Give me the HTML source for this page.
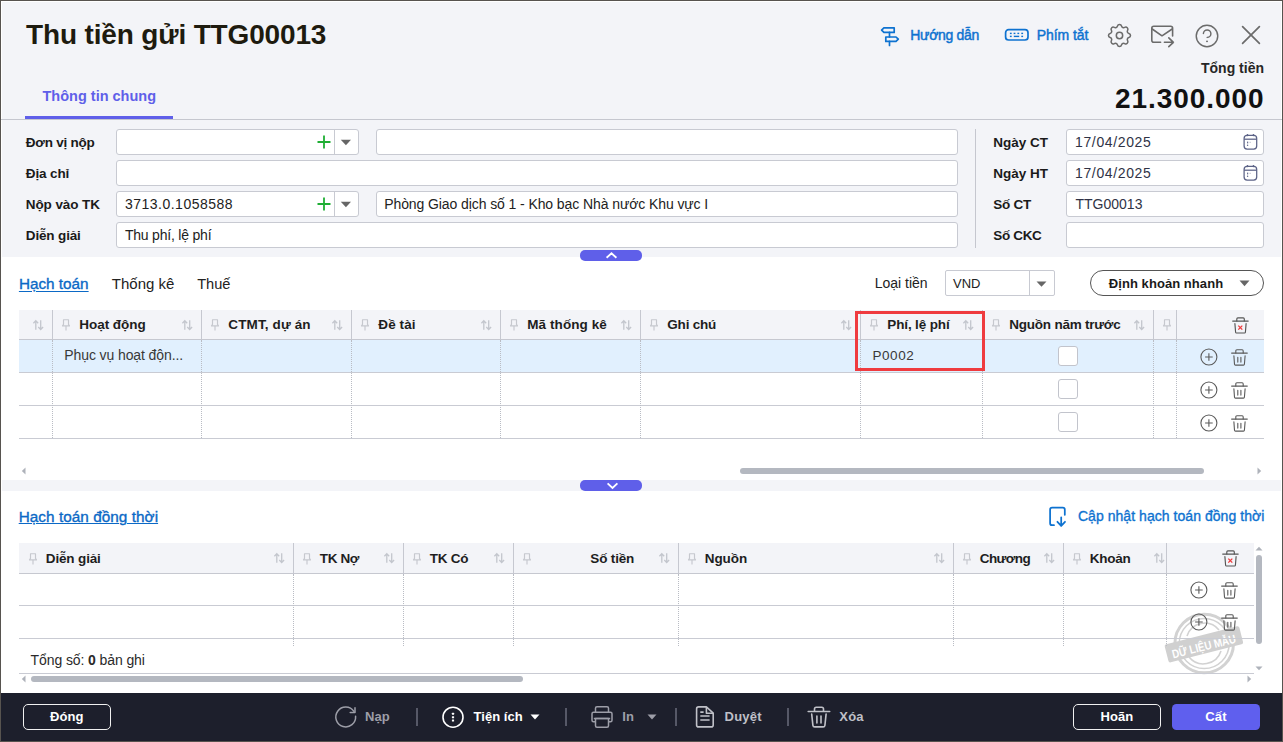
<!DOCTYPE html>
<html><head><meta charset="utf-8"><style>
html,body{margin:0;padding:0;width:1283px;height:742px;overflow:hidden;background:#f3f4f8;}
body{position:relative;font-family:"Liberation Sans", sans-serif;}
.t{position:absolute;line-height:1;white-space:nowrap;}
.b{position:absolute;box-sizing:border-box;}
.s{position:absolute;overflow:visible;}
b{font-weight:700;}
</style></head><body>
<div class="b" style="left:0px;top:0px;width:1283px;height:742px;background:#f3f4f8;"></div>
<div class="b" style="left:1px;top:1px;width:1281px;height:692px;border-top:1px solid #fff;border-left:1px solid #fff;border-right:1px solid #fff;"></div>
<div class="b" style="left:2px;top:257px;width:1279px;height:436px;background:#fff;"></div>
<div class="t" style="left:26px;top:20.70px;font-size:28px;font-weight:700;color:#1e1b0f;letter-spacing:-0.15px;">Thu tiền gửi TTG00013</div>
<svg class="s" style="left:876px;top:22px;" width="28" height="28" viewBox="0 0 28 28"><g fill="none" stroke="#0e72d0" stroke-width="1.7" stroke-linejoin="round" stroke-linecap="round"><path d="M5.6,8.1 L7.9,5.8 H18.2 V10.4 H7.9 Z"/><path d="M13.5,10.4 V15"/><path d="M9.8,15 H20 L22.3,17.2 L20,19.4 H9.8 Z"/><path d="M13.5,19.4 V23.4"/></g></svg>
<div class="t" style="left:910.3px;top:28.25px;font-size:14px;font-weight:400;color:#0e72d0;letter-spacing:-0.3px;-webkit-text-stroke:0.45px #0e72d0;">Hướng dẫn</div>
<svg class="s" style="left:1000px;top:22px;" width="32" height="26" viewBox="0 0 32 26"><g fill="none" stroke="#0e72d0" stroke-width="1.7"><rect x="5.6" y="7.7" width="22.4" height="10.3" rx="3"/></g><g fill="#0e72d0"><rect x="9.9" y="10.7" width="1.8" height="1.4"/><rect x="13.6" y="10.7" width="1.8" height="1.4"/><rect x="17.4" y="10.7" width="1.8" height="1.4"/><rect x="21.3" y="10.7" width="1.8" height="1.4"/><rect x="9.9" y="13.7" width="1.8" height="1.4"/><rect x="13.8" y="13.7" width="5.4" height="1.4"/><rect x="21.3" y="13.7" width="1.8" height="1.4"/></g></svg>
<div class="t" style="left:1036.7px;top:28.25px;font-size:14px;font-weight:400;color:#0e72d0;letter-spacing:-0.05px;-webkit-text-stroke:0.45px #0e72d0;">Phím tắt</div>
<svg class="s" style="left:1107.6px;top:23.6px;" width="23" height="23" viewBox="2.6 2.6 18.8 18.8"><g fill="none" stroke="#6b6b6b" stroke-width="1.25" stroke-linejoin="round"><path d="M10.325 4.317c.426 -1.756 2.924 -1.756 3.35 0a1.724 1.724 0 0 0 2.573 1.066c1.543 -.94 3.31 .826 2.37 2.37a1.724 1.724 0 0 0 1.065 2.572c1.756 .426 1.756 2.924 0 3.35a1.724 1.724 0 0 0 -1.066 2.573c.94 1.543 -.826 3.31 -2.37 2.37a1.724 1.724 0 0 0 -2.572 1.065c-.426 1.756 -2.924 1.756 -3.35 0a1.724 1.724 0 0 0 -2.573 -1.066c-1.543 .94 -3.31 -.826 -2.37 -2.37a1.724 1.724 0 0 0 -1.065 -2.572c-1.756 -.426 -1.756 -2.924 0 -3.35a1.724 1.724 0 0 0 1.066 -2.573c-.94 -1.543 .826 -3.31 2.37 -2.37c1 .608 2.296 .07 2.572 -1.065z"/><circle cx="12" cy="12" r="2.6"/></g></svg>
<svg class="s" style="left:1145.4px;top:20px;" width="34" height="30" viewBox="0 0 34 30"><g fill="none" stroke="#6b6b6b" stroke-width="1.6" stroke-linecap="round" stroke-linejoin="round"><path d="M15.6,22.3 H8.8 Q6.8,22.3 6.8,20.3 V8.2 Q6.8,6.2 8.8,6.2 H25.6 Q27.6,6.2 27.6,8.2 V16"/><path d="M7.2,9 L17,15.8 L27.2,9"/><path d="M19.4,22.3 H28.4 M23.8,17.9 L28.4,22.3 L23.8,26.7"/></g></svg>
<svg class="s" style="left:1194px;top:23px;" width="26" height="26" viewBox="0 0 26 26"><g fill="none" stroke="#6b6b6b" stroke-width="1.45" stroke-linecap="round"><circle cx="13" cy="13" r="10.75"/><path d="M9.4,10.6 A3.75,3.75 0 1 1 13.2,14.4"/></g><ellipse cx="13" cy="18.4" rx="1" ry="0.8" fill="#6b6b6b"/></svg>
<svg class="s" style="left:1240px;top:24px;" width="22" height="22" viewBox="0 0 22 22"><g stroke="#6b6b6b" stroke-width="1.7" stroke-linecap="round"><path d="M2.6,2.6 L19.4,19.4 M19.4,2.6 L2.6,19.4"/></g></svg>
<div class="t" style="right:19px;top:60.95px;font-size:14px;font-weight:700;color:#262626;letter-spacing:0px;">Tổng tiền</div>
<div class="t" style="left:1115px;top:85.20px;font-size:28px;font-weight:700;color:#111;letter-spacing:0.95px;">21.300.000</div>
<div class="t" style="left:42.5px;top:88.93px;font-size:14.5px;font-weight:700;color:#5f5fe9;letter-spacing:0px;">Thông tin chung</div>
<div class="b" style="left:1px;top:119px;width:1281px;height:1px;background:#c5c7cf;"></div>
<div class="b" style="left:25px;top:116px;width:148px;height:3px;background:#5f5fe9;"></div>
<div class="t" style="left:25.8px;top:135.77px;font-size:13.5px;font-weight:700;color:#1a1a1a;letter-spacing:-0.24px;">Đơn vị nộp</div>
<div class="t" style="left:25.8px;top:166.77px;font-size:13.5px;font-weight:700;color:#1a1a1a;letter-spacing:-0.12px;">Địa chỉ</div>
<div class="t" style="left:25.8px;top:197.77px;font-size:13.5px;font-weight:700;color:#1a1a1a;letter-spacing:-0.1px;">Nộp vào TK</div>
<div class="t" style="left:25.8px;top:228.77px;font-size:13.5px;font-weight:700;color:#1a1a1a;letter-spacing:-0.15px;">Diễn giải</div>
<div class="b" style="left:116px;top:129px;width:243px;height:26px;background:#fff;border:1px solid #c8cad2;border-radius:3px;"></div>
<div class="b" style="left:334px;top:130px;width:1px;height:24px;background:#c8cad2;"></div>
<svg class="s" style="left:317px;top:135px;" width="14" height="14" viewBox="0 0 14 14"><path d="M7,0.5 V13.5 M0.5,7 H13.5" stroke="#1fae34" stroke-width="1.8"/></svg>
<svg class="s" style="left:340px;top:139px;" width="12" height="7" viewBox="0 0 12 7"><path d="M0.8,0.8 H11 L5.9,6.2 Z" fill="#666"/></svg>
<div class="b" style="left:376px;top:129px;width:582px;height:26px;background:#fff;border:1px solid #c8cad2;border-radius:3px;"></div>
<div class="b" style="left:116px;top:160px;width:842px;height:26px;background:#fff;border:1px solid #c8cad2;border-radius:3px;"></div>
<div class="b" style="left:116px;top:191px;width:243px;height:26px;background:#fff;border:1px solid #c8cad2;border-radius:3px;"></div>
<div class="b" style="left:334px;top:192px;width:1px;height:24px;background:#c8cad2;"></div>
<svg class="s" style="left:317px;top:197px;" width="14" height="14" viewBox="0 0 14 14"><path d="M7,0.5 V13.5 M0.5,7 H13.5" stroke="#1fae34" stroke-width="1.8"/></svg>
<svg class="s" style="left:340px;top:201px;" width="12" height="7" viewBox="0 0 12 7"><path d="M0.8,0.8 H11 L5.9,6.2 Z" fill="#666"/></svg>
<div class="t" style="left:124.9px;top:196.95px;font-size:14px;font-weight:400;color:#222;letter-spacing:0.5px;">3713.0.1058588</div>
<div class="b" style="left:376px;top:191px;width:582px;height:26px;background:#fff;border:1px solid #c8cad2;border-radius:3px;"></div>
<div class="t" style="left:384.2px;top:196.95px;font-size:14px;font-weight:400;color:#222;letter-spacing:-0.09px;">Phòng Giao dịch số 1 - Kho bạc Nhà nước Khu vực I</div>
<div class="b" style="left:116px;top:222px;width:842px;height:26px;background:#fff;border:1px solid #c8cad2;border-radius:3px;"></div>
<div class="t" style="left:124.9px;top:228.35px;font-size:14px;font-weight:400;color:#222;letter-spacing:-0.2px;">Thu phí, lệ phí</div>
<div class="b" style="left:975px;top:129px;width:1px;height:119px;background:#c5c7cf;"></div>
<div class="t" style="left:993.3px;top:135.77px;font-size:13.5px;font-weight:700;color:#1a1a1a;letter-spacing:0px;">Ngày CT</div>
<div class="b" style="left:1066px;top:129px;width:198px;height:26px;background:#fff;border:1px solid #c8cad2;border-radius:3px;"></div>
<div class="t" style="left:993.3px;top:166.77px;font-size:13.5px;font-weight:700;color:#1a1a1a;letter-spacing:0px;">Ngày HT</div>
<div class="b" style="left:1066px;top:160px;width:198px;height:26px;background:#fff;border:1px solid #c8cad2;border-radius:3px;"></div>
<div class="t" style="left:993.3px;top:197.77px;font-size:13.5px;font-weight:700;color:#1a1a1a;letter-spacing:-0.28px;">Số CT</div>
<div class="b" style="left:1066px;top:191px;width:198px;height:26px;background:#fff;border:1px solid #c8cad2;border-radius:3px;"></div>
<div class="t" style="left:993.3px;top:228.77px;font-size:13.5px;font-weight:700;color:#1a1a1a;letter-spacing:-0.35px;">Số CKC</div>
<div class="b" style="left:1066px;top:222px;width:198px;height:26px;background:#fff;border:1px solid #c8cad2;border-radius:3px;"></div>
<svg class="s" style="left:1242.5px;top:134px;" width="16" height="17" viewBox="0 0 16 17"><g fill="none" stroke="#5b6286" stroke-width="1.25"><rect x="1.1" y="1.4" width="12.6" height="13.6" rx="3"/><path d="M1.1,5.2 H13.7"/></g><g fill="#5b6286"><rect x="3.6" y="0.1" width="1.7" height="2.2" rx="0.8"/><rect x="9.6" y="0.1" width="1.7" height="2.2" rx="0.8"/><rect x="4.1" y="7.6" width="1.1" height="1.8" /><circle cx="4.6" cy="11.3" r="0.7"/><rect x="6.6" y="7.8" width="1.1" height="1.1" opacity="0.45"/></g></svg>
<svg class="s" style="left:1242.5px;top:165px;" width="16" height="17" viewBox="0 0 16 17"><g fill="none" stroke="#5b6286" stroke-width="1.25"><rect x="1.1" y="1.4" width="12.6" height="13.6" rx="3"/><path d="M1.1,5.2 H13.7"/></g><g fill="#5b6286"><rect x="3.6" y="0.1" width="1.7" height="2.2" rx="0.8"/><rect x="9.6" y="0.1" width="1.7" height="2.2" rx="0.8"/><rect x="4.1" y="7.6" width="1.1" height="1.8" /><circle cx="4.6" cy="11.3" r="0.7"/><rect x="6.6" y="7.8" width="1.1" height="1.1" opacity="0.45"/></g></svg>
<div class="t" style="left:1075px;top:135.15px;font-size:14px;font-weight:400;color:#2f3346;letter-spacing:0.64px;">17/04/2025</div>
<div class="t" style="left:1075px;top:166.15px;font-size:14px;font-weight:400;color:#2f3346;letter-spacing:0.64px;">17/04/2025</div>
<div class="t" style="left:1075.5px;top:197.15px;font-size:14px;font-weight:400;color:#2f3346;letter-spacing:0px;">TTG00013</div>
<div class="b" style="left:580px;top:250px;width:62px;height:11px;background:#5f5fe9;border-radius:5px;"></div>
<svg class="s" style="left:605.4px;top:252.3px;" width="13" height="7" viewBox="0 0 13 7"><path d="M1.6,5.8 L6.5,1.3 L11.4,5.8" fill="none" stroke="#fff" stroke-width="1.85"/></svg>
<div class="t" style="left:18.9px;top:275.75px;font-size:15.3px;font-weight:400;color:#0b69c6;letter-spacing:0px;text-decoration:underline;text-underline-offset:1.5px;text-decoration-thickness:1.3px;-webkit-text-stroke:0.35px #0b69c6;">Hạch toán</div>
<div class="t" style="left:111.8px;top:276.40px;font-size:15px;font-weight:400;color:#222;letter-spacing:0px;">Thống kê</div>
<div class="t" style="left:197.2px;top:276.74px;font-size:14.6px;font-weight:400;color:#222;letter-spacing:0px;">Thuế</div>
<div class="t" style="left:874.7px;top:276.35px;font-size:14px;font-weight:400;color:#222;letter-spacing:0px;">Loại tiền</div>
<div class="b" style="left:945px;top:270px;width:110px;height:26px;background:#fff;border:1px solid #c8cad2;border-radius:2px;"></div>
<div class="b" style="left:1029px;top:271px;width:1px;height:24px;background:#c8cad2;"></div>
<div class="t" style="left:953px;top:277.20px;font-size:13px;font-weight:400;color:#222;letter-spacing:0px;">VND</div>
<svg class="s" style="left:1036px;top:281px;" width="11" height="6" viewBox="0 0 11 6"><path d="M0.5,0.5 H10.5 L5.5,5.8 Z" fill="#666"/></svg>
<div class="b" style="left:1090px;top:270px;width:174px;height:26px;border:1px solid #555;border-radius:13px;background:#fff;"></div>
<div class="t" style="left:1108.8px;top:276.60px;font-size:13px;font-weight:700;color:#1a1a1a;letter-spacing:0.06px;">Định khoản nhanh</div>
<svg class="s" style="left:1238.5px;top:280px;" width="11" height="7" viewBox="0 0 11 7"><path d="M0.5,0.5 H10.5 L5.5,6.2 Z" fill="#666"/></svg>
<div class="b" style="left:19px;top:310px;width:1245px;height:29px;background:#f3f4f8;"></div>
<div class="b" style="left:19px;top:339px;width:1245px;height:1px;background:#c6c8d0;"></div>
<div class="b" style="left:19px;top:340px;width:1245px;height:32px;background:#e1f0fe;"></div>
<div class="b" style="left:19px;top:372px;width:1245px;height:1px;background:#c9cbd3;"></div>
<div class="b" style="left:19px;top:405px;width:1245px;height:1px;background:#c9cbd3;"></div>
<div class="b" style="left:19px;top:438px;width:1245px;height:1px;background:#c9cbd3;"></div>
<div class="b" style="left:52px;top:310px;width:1px;height:29px;background:#c6c8d0;"></div>
<div class="b" style="left:52px;top:340px;width:0;height:98px;border-left:1px dotted #b9bcc4;"></div>
<div class="b" style="left:201px;top:310px;width:1px;height:29px;background:#c6c8d0;"></div>
<div class="b" style="left:201px;top:340px;width:0;height:98px;border-left:1px dotted #b9bcc4;"></div>
<div class="b" style="left:351px;top:310px;width:1px;height:29px;background:#c6c8d0;"></div>
<div class="b" style="left:351px;top:340px;width:0;height:98px;border-left:1px dotted #b9bcc4;"></div>
<div class="b" style="left:500px;top:310px;width:1px;height:29px;background:#c6c8d0;"></div>
<div class="b" style="left:500px;top:340px;width:0;height:98px;border-left:1px dotted #b9bcc4;"></div>
<div class="b" style="left:640px;top:310px;width:1px;height:29px;background:#c6c8d0;"></div>
<div class="b" style="left:640px;top:340px;width:0;height:98px;border-left:1px dotted #b9bcc4;"></div>
<div class="b" style="left:860px;top:310px;width:1px;height:29px;background:#c6c8d0;"></div>
<div class="b" style="left:860px;top:340px;width:0;height:98px;border-left:1px dotted #b9bcc4;"></div>
<div class="b" style="left:982px;top:310px;width:1px;height:29px;background:#c6c8d0;"></div>
<div class="b" style="left:982px;top:340px;width:0;height:98px;border-left:1px dotted #b9bcc4;"></div>
<div class="b" style="left:1153px;top:310px;width:1px;height:29px;background:#c6c8d0;"></div>
<div class="b" style="left:1153px;top:340px;width:0;height:98px;border-left:1px dotted #b9bcc4;"></div>
<div class="b" style="left:1176px;top:310px;width:1px;height:29px;background:#c6c8d0;"></div>
<div class="b" style="left:1176px;top:340px;width:0;height:98px;border-left:1px dotted #b9bcc4;"></div>
<svg class="s" style="left:33px;top:320px;" width="11" height="10" viewBox="0 0 11 10"><g fill="none" stroke="#c3c6cd" stroke-width="1.3"><path d="M2.8,0.8 V9.8 M0.4,3.2 L2.8,0.7 L5.2,3.2"/><path d="M7.7,0.3 V9.4 M5.3,7 L7.7,9.5 L10.1,7"/></g></svg>
<svg class="s" style="left:62px;top:319px;" width="8" height="12" viewBox="0 0 8 12"><g fill="none" stroke="#c6c8ce" stroke-width="1.15" stroke-linejoin="round"><path d="M1.5,0.7 H6.5 V5.4 L7.5,6.9 H0.5 L1.5,5.4 Z"/><path d="M4,6.9 V11.4"/></g></svg>
<div class="t" style="left:79.3px;top:317.57px;font-size:13.5px;font-weight:700;color:#1e1e1e;letter-spacing:-0.05px;">Hoạt động</div>
<svg class="s" style="left:181.5px;top:320px;" width="11" height="10" viewBox="0 0 11 10"><g fill="none" stroke="#c3c6cd" stroke-width="1.3"><path d="M2.8,0.8 V9.8 M0.4,3.2 L2.8,0.7 L5.2,3.2"/><path d="M7.7,0.3 V9.4 M5.3,7 L7.7,9.5 L10.1,7"/></g></svg>
<svg class="s" style="left:211px;top:319px;" width="8" height="12" viewBox="0 0 8 12"><g fill="none" stroke="#c6c8ce" stroke-width="1.15" stroke-linejoin="round"><path d="M1.5,0.7 H6.5 V5.4 L7.5,6.9 H0.5 L1.5,5.4 Z"/><path d="M4,6.9 V11.4"/></g></svg>
<div class="t" style="left:228.3px;top:317.57px;font-size:13.5px;font-weight:700;color:#1e1e1e;letter-spacing:0.12px;">CTMT, dự án</div>
<svg class="s" style="left:331.5px;top:320px;" width="11" height="10" viewBox="0 0 11 10"><g fill="none" stroke="#c3c6cd" stroke-width="1.3"><path d="M2.8,0.8 V9.8 M0.4,3.2 L2.8,0.7 L5.2,3.2"/><path d="M7.7,0.3 V9.4 M5.3,7 L7.7,9.5 L10.1,7"/></g></svg>
<svg class="s" style="left:361px;top:319px;" width="8" height="12" viewBox="0 0 8 12"><g fill="none" stroke="#c6c8ce" stroke-width="1.15" stroke-linejoin="round"><path d="M1.5,0.7 H6.5 V5.4 L7.5,6.9 H0.5 L1.5,5.4 Z"/><path d="M4,6.9 V11.4"/></g></svg>
<div class="t" style="left:378.3px;top:317.57px;font-size:13.5px;font-weight:700;color:#1e1e1e;letter-spacing:0.1px;">Đề tài</div>
<svg class="s" style="left:480.5px;top:320px;" width="11" height="10" viewBox="0 0 11 10"><g fill="none" stroke="#c3c6cd" stroke-width="1.3"><path d="M2.8,0.8 V9.8 M0.4,3.2 L2.8,0.7 L5.2,3.2"/><path d="M7.7,0.3 V9.4 M5.3,7 L7.7,9.5 L10.1,7"/></g></svg>
<svg class="s" style="left:510px;top:319px;" width="8" height="12" viewBox="0 0 8 12"><g fill="none" stroke="#c6c8ce" stroke-width="1.15" stroke-linejoin="round"><path d="M1.5,0.7 H6.5 V5.4 L7.5,6.9 H0.5 L1.5,5.4 Z"/><path d="M4,6.9 V11.4"/></g></svg>
<div class="t" style="left:527.3px;top:317.57px;font-size:13.5px;font-weight:700;color:#1e1e1e;letter-spacing:0.08px;">Mã thống kê</div>
<svg class="s" style="left:620.5px;top:320px;" width="11" height="10" viewBox="0 0 11 10"><g fill="none" stroke="#c3c6cd" stroke-width="1.3"><path d="M2.8,0.8 V9.8 M0.4,3.2 L2.8,0.7 L5.2,3.2"/><path d="M7.7,0.3 V9.4 M5.3,7 L7.7,9.5 L10.1,7"/></g></svg>
<svg class="s" style="left:650px;top:319px;" width="8" height="12" viewBox="0 0 8 12"><g fill="none" stroke="#c6c8ce" stroke-width="1.15" stroke-linejoin="round"><path d="M1.5,0.7 H6.5 V5.4 L7.5,6.9 H0.5 L1.5,5.4 Z"/><path d="M4,6.9 V11.4"/></g></svg>
<div class="t" style="left:667.3px;top:317.57px;font-size:13.5px;font-weight:700;color:#1e1e1e;letter-spacing:-0.2px;">Ghi chú</div>
<svg class="s" style="left:840.5px;top:320px;" width="11" height="10" viewBox="0 0 11 10"><g fill="none" stroke="#c3c6cd" stroke-width="1.3"><path d="M2.8,0.8 V9.8 M0.4,3.2 L2.8,0.7 L5.2,3.2"/><path d="M7.7,0.3 V9.4 M5.3,7 L7.7,9.5 L10.1,7"/></g></svg>
<svg class="s" style="left:870px;top:319px;" width="8" height="12" viewBox="0 0 8 12"><g fill="none" stroke="#c6c8ce" stroke-width="1.15" stroke-linejoin="round"><path d="M1.5,0.7 H6.5 V5.4 L7.5,6.9 H0.5 L1.5,5.4 Z"/><path d="M4,6.9 V11.4"/></g></svg>
<div class="t" style="left:887.3px;top:317.57px;font-size:13.5px;font-weight:700;color:#1e1e1e;letter-spacing:-0.14px;">Phí, lệ phí</div>
<svg class="s" style="left:962.5px;top:320px;" width="11" height="10" viewBox="0 0 11 10"><g fill="none" stroke="#c3c6cd" stroke-width="1.3"><path d="M2.8,0.8 V9.8 M0.4,3.2 L2.8,0.7 L5.2,3.2"/><path d="M7.7,0.3 V9.4 M5.3,7 L7.7,9.5 L10.1,7"/></g></svg>
<svg class="s" style="left:992px;top:319px;" width="8" height="12" viewBox="0 0 8 12"><g fill="none" stroke="#c6c8ce" stroke-width="1.15" stroke-linejoin="round"><path d="M1.5,0.7 H6.5 V5.4 L7.5,6.9 H0.5 L1.5,5.4 Z"/><path d="M4,6.9 V11.4"/></g></svg>
<div class="t" style="left:1009.3px;top:317.57px;font-size:13.5px;font-weight:700;color:#1e1e1e;letter-spacing:-0.23px;">Nguồn năm trước</div>
<svg class="s" style="left:1133.5px;top:320px;" width="11" height="10" viewBox="0 0 11 10"><g fill="none" stroke="#c3c6cd" stroke-width="1.3"><path d="M2.8,0.8 V9.8 M0.4,3.2 L2.8,0.7 L5.2,3.2"/><path d="M7.7,0.3 V9.4 M5.3,7 L7.7,9.5 L10.1,7"/></g></svg>
<svg class="s" style="left:1163px;top:319px;" width="8" height="12" viewBox="0 0 8 12"><g fill="none" stroke="#c6c8ce" stroke-width="1.15" stroke-linejoin="round"><path d="M1.5,0.7 H6.5 V5.4 L7.5,6.9 H0.5 L1.5,5.4 Z"/><path d="M4,6.9 V11.4"/></g></svg>
<svg class="s" style="left:1231.5px;top:316.5px;" width="17" height="17" viewBox="0 0 17 17"><g fill="none" stroke="#555" stroke-width="1.15" stroke-linecap="round"><path d="M0.7,4.1 H16.2"/><path d="M4.8,3.9 V2.0 Q4.8,0.9 5.9,0.9 H11.2 Q12.3,0.9 12.3,2 V3.9"/><path d="M2.9,6.6 L3.6,15.2 Q3.7,16 4.5,16 H12.5 Q13.3,16 13.4,15.2 L14.1,6.6"/></g><path d="M6.3,8.6 L10.3,12.6 M10.3,8.6 L6.3,12.6" stroke="#f0393a" stroke-width="1.3"/></svg>
<div class="t" style="left:64.3px;top:348.35px;font-size:14px;font-weight:400;color:#383838;letter-spacing:-0.1px;">Phục vụ hoạt độn...</div>
<div class="t" style="left:872.5px;top:349.17px;font-size:13.5px;font-weight:400;color:#383838;letter-spacing:0.55px;">P0002</div>
<div class="b" style="left:1058px;top:346px;width:20px;height:20px;background:#fff;border:1px solid #c2c4cc;border-radius:3px;"></div>
<svg class="s" style="left:1199.5px;top:348px;" width="18" height="18" viewBox="0 0 18 18"><g fill="none" stroke="#5a5a5a" stroke-width="1.1"><circle cx="8.9" cy="9" r="8"/><path d="M8.9,5.2 V12.8 M5.1,9 H12.7"/></g></svg>
<svg class="s" style="left:1230.5px;top:348.5px;" width="17" height="17" viewBox="0 0 17 17"><g fill="none" stroke="#5a5a5a" stroke-width="1.1" stroke-linecap="round"><path d="M0.6,4.1 H16.3"/><path d="M4.8,3.9 V1.9 Q4.8,0.8 5.9,0.8 H11.1 Q12.2,0.8 12.2,1.9 V3.9"/><path d="M2.9,6.9 L3.5,15.2 Q3.6,16.1 4.4,16.1 H12.5 Q13.3,16.1 13.4,15.2 L14.1,6.9"/><path d="M6.8,8.2 V13.1 M9.9,8.2 V13.1"/></g></svg>
<div class="b" style="left:1058px;top:379px;width:20px;height:20px;background:#fff;border:1px solid #c2c4cc;border-radius:3px;"></div>
<svg class="s" style="left:1199.5px;top:381px;" width="18" height="18" viewBox="0 0 18 18"><g fill="none" stroke="#5a5a5a" stroke-width="1.1"><circle cx="8.9" cy="9" r="8"/><path d="M8.9,5.2 V12.8 M5.1,9 H12.7"/></g></svg>
<svg class="s" style="left:1230.5px;top:381.5px;" width="17" height="17" viewBox="0 0 17 17"><g fill="none" stroke="#5a5a5a" stroke-width="1.1" stroke-linecap="round"><path d="M0.6,4.1 H16.3"/><path d="M4.8,3.9 V1.9 Q4.8,0.8 5.9,0.8 H11.1 Q12.2,0.8 12.2,1.9 V3.9"/><path d="M2.9,6.9 L3.5,15.2 Q3.6,16.1 4.4,16.1 H12.5 Q13.3,16.1 13.4,15.2 L14.1,6.9"/><path d="M6.8,8.2 V13.1 M9.9,8.2 V13.1"/></g></svg>
<div class="b" style="left:1058px;top:412px;width:20px;height:20px;background:#fff;border:1px solid #c2c4cc;border-radius:3px;"></div>
<svg class="s" style="left:1199.5px;top:414px;" width="18" height="18" viewBox="0 0 18 18"><g fill="none" stroke="#5a5a5a" stroke-width="1.1"><circle cx="8.9" cy="9" r="8"/><path d="M8.9,5.2 V12.8 M5.1,9 H12.7"/></g></svg>
<svg class="s" style="left:1230.5px;top:414.5px;" width="17" height="17" viewBox="0 0 17 17"><g fill="none" stroke="#5a5a5a" stroke-width="1.1" stroke-linecap="round"><path d="M0.6,4.1 H16.3"/><path d="M4.8,3.9 V1.9 Q4.8,0.8 5.9,0.8 H11.1 Q12.2,0.8 12.2,1.9 V3.9"/><path d="M2.9,6.9 L3.5,15.2 Q3.6,16.1 4.4,16.1 H12.5 Q13.3,16.1 13.4,15.2 L14.1,6.9"/><path d="M6.8,8.2 V13.1 M9.9,8.2 V13.1"/></g></svg>
<div class="b" style="left:855px;top:311px;width:130px;height:60px;border:3px solid #ef3b3f;"></div>
<svg class="s" style="left:21px;top:467px;" width="5" height="8" viewBox="0 0 5 8"><path d="M4.5,0.5 V7.5 L0.8,4 Z" fill="#aeb2ba"/></svg>
<div class="b" style="left:740px;top:468px;width:464px;height:6px;background:#b4b8c0;border-radius:3px;"></div>
<svg class="s" style="left:1257px;top:467px;" width="5" height="8" viewBox="0 0 5 8"><path d="M0.5,0.5 V7.5 L4.2,4 Z" fill="#aeb2ba"/></svg>
<div class="b" style="left:2px;top:480px;width:1279px;height:11px;background:#f3f4f8;"></div>
<div class="b" style="left:580px;top:480px;width:62px;height:11px;background:#5f5fe9;border-radius:5px;"></div>
<svg class="s" style="left:605.6px;top:482px;" width="13" height="7" viewBox="0 0 13 7"><path d="M1.6,1.3 L6.5,5.9 L11.4,1.3" fill="none" stroke="#fff" stroke-width="1.85"/></svg>
<div class="t" style="left:18.7px;top:509.45px;font-size:15.3px;font-weight:400;color:#0b69c6;letter-spacing:0.05px;text-decoration:underline;text-underline-offset:1px;text-decoration-thickness:1.3px;-webkit-text-stroke:0.35px #0b69c6;">Hạch toán đồng thời</div>
<svg class="s" style="left:1047px;top:505px;" width="21" height="23" viewBox="0 0 21 23"><g fill="none" stroke="#0e72d0" stroke-width="1.75" stroke-linecap="round" stroke-linejoin="round"><path d="M7,20.2 H5.1 Q3.1,20.2 3.1,18.2 V4.7 Q3.1,2.7 5.1,2.7 H15.8 Q17.8,2.7 17.8,4.7 V9.8"/><path d="M14.2,12.3 V20.9 M10.4,16.8 L14.2,20.9 L18,16.8"/></g></svg>
<div class="t" style="left:1077.9px;top:509.35px;font-size:14px;font-weight:400;color:#0e72d0;letter-spacing:0.05px;-webkit-text-stroke:0.35px #0e72d0;">Cập nhật hạch toán đồng thời</div>
<div class="b" style="left:19px;top:543px;width:1235px;height:30px;background:#f3f4f8;"></div>
<svg class="s" style="left:1163px;top:603px;" width="82" height="82" viewBox="0 0 82 82"><g fill="none" stroke="#d2d2d2"><circle cx="41.2" cy="40.5" r="29.3" stroke-width="3"/><circle cx="41.2" cy="40.5" r="25" stroke-width="1.5"/><path d="M24,33 A18.5,18.5 0 0 1 56,27" stroke-width="1.6"/><path d="M58,48 A18.5,18.5 0 0 1 26,54" stroke-width="1.6"/></g><g transform="rotate(-14.25 40.9 41.3)"><rect x="2.4" y="32" width="77" height="18.6" rx="2" fill="#d0d0d0"/><text x="7.6" y="47.5" font-family="Liberation Sans" font-weight="700" font-size="12" textLength="65.5" lengthAdjust="spacingAndGlyphs" fill="#fff">DỮ LIỆU MẪU</text></g></svg>
<div class="b" style="left:19px;top:573px;width:1235px;height:1px;background:#c6c8d0;"></div>
<div class="b" style="left:19px;top:605px;width:1235px;height:1px;background:#c9cbd3;"></div>
<div class="b" style="left:19px;top:638px;width:1235px;height:1px;background:#c9cbd3;"></div>
<div class="b" style="left:19px;top:673px;width:1235px;height:1px;background:#c9cbd3;"></div>
<div class="b" style="left:293px;top:543px;width:1px;height:30px;background:#c6c8d0;"></div>
<div class="b" style="left:293px;top:574px;width:0;height:72px;border-left:1px dotted #b9bcc4;"></div>
<div class="b" style="left:403px;top:543px;width:1px;height:30px;background:#c6c8d0;"></div>
<div class="b" style="left:403px;top:574px;width:0;height:72px;border-left:1px dotted #b9bcc4;"></div>
<div class="b" style="left:513px;top:543px;width:1px;height:30px;background:#c6c8d0;"></div>
<div class="b" style="left:513px;top:574px;width:0;height:72px;border-left:1px dotted #b9bcc4;"></div>
<div class="b" style="left:678px;top:543px;width:1px;height:30px;background:#c6c8d0;"></div>
<div class="b" style="left:678px;top:574px;width:0;height:72px;border-left:1px dotted #b9bcc4;"></div>
<div class="b" style="left:953px;top:543px;width:1px;height:30px;background:#c6c8d0;"></div>
<div class="b" style="left:953px;top:574px;width:0;height:72px;border-left:1px dotted #b9bcc4;"></div>
<div class="b" style="left:1063px;top:543px;width:1px;height:30px;background:#c6c8d0;"></div>
<div class="b" style="left:1063px;top:574px;width:0;height:72px;border-left:1px dotted #b9bcc4;"></div>
<div class="b" style="left:1166px;top:543px;width:1px;height:30px;background:#c6c8d0;"></div>
<div class="b" style="left:1166px;top:574px;width:0;height:72px;border-left:1px dotted #b9bcc4;"></div>
<svg class="s" style="left:29px;top:552.6px;" width="8" height="12" viewBox="0 0 8 12"><g fill="none" stroke="#c6c8ce" stroke-width="1.15" stroke-linejoin="round"><path d="M1.5,0.7 H6.5 V5.4 L7.5,6.9 H0.5 L1.5,5.4 Z"/><path d="M4,6.9 V11.4"/></g></svg>
<div class="t" style="left:45.8px;top:552.07px;font-size:13.5px;font-weight:700;color:#1e1e1e;letter-spacing:-0.15px;">Diễn giải</div>
<svg class="s" style="left:273.5px;top:552.6px;" width="11" height="10" viewBox="0 0 11 10"><g fill="none" stroke="#c3c6cd" stroke-width="1.3"><path d="M2.8,0.8 V9.8 M0.4,3.2 L2.8,0.7 L5.2,3.2"/><path d="M7.7,0.3 V9.4 M5.3,7 L7.7,9.5 L10.1,7"/></g></svg>
<svg class="s" style="left:303px;top:552.6px;" width="8" height="12" viewBox="0 0 8 12"><g fill="none" stroke="#c6c8ce" stroke-width="1.15" stroke-linejoin="round"><path d="M1.5,0.7 H6.5 V5.4 L7.5,6.9 H0.5 L1.5,5.4 Z"/><path d="M4,6.9 V11.4"/></g></svg>
<div class="t" style="left:319.8px;top:552.07px;font-size:13.5px;font-weight:700;color:#1e1e1e;letter-spacing:-0.38px;">TK Nợ</div>
<svg class="s" style="left:383.5px;top:552.6px;" width="11" height="10" viewBox="0 0 11 10"><g fill="none" stroke="#c3c6cd" stroke-width="1.3"><path d="M2.8,0.8 V9.8 M0.4,3.2 L2.8,0.7 L5.2,3.2"/><path d="M7.7,0.3 V9.4 M5.3,7 L7.7,9.5 L10.1,7"/></g></svg>
<svg class="s" style="left:413px;top:552.6px;" width="8" height="12" viewBox="0 0 8 12"><g fill="none" stroke="#c6c8ce" stroke-width="1.15" stroke-linejoin="round"><path d="M1.5,0.7 H6.5 V5.4 L7.5,6.9 H0.5 L1.5,5.4 Z"/><path d="M4,6.9 V11.4"/></g></svg>
<div class="t" style="left:429.8px;top:552.07px;font-size:13.5px;font-weight:700;color:#1e1e1e;letter-spacing:-0.24px;">TK Có</div>
<svg class="s" style="left:493.5px;top:552.6px;" width="11" height="10" viewBox="0 0 11 10"><g fill="none" stroke="#c3c6cd" stroke-width="1.3"><path d="M2.8,0.8 V9.8 M0.4,3.2 L2.8,0.7 L5.2,3.2"/><path d="M7.7,0.3 V9.4 M5.3,7 L7.7,9.5 L10.1,7"/></g></svg>
<svg class="s" style="left:523px;top:552.6px;" width="8" height="12" viewBox="0 0 8 12"><g fill="none" stroke="#c6c8ce" stroke-width="1.15" stroke-linejoin="round"><path d="M1.5,0.7 H6.5 V5.4 L7.5,6.9 H0.5 L1.5,5.4 Z"/><path d="M4,6.9 V11.4"/></g></svg>
<svg class="s" style="left:658.5px;top:552.6px;" width="11" height="10" viewBox="0 0 11 10"><g fill="none" stroke="#c3c6cd" stroke-width="1.3"><path d="M2.8,0.8 V9.8 M0.4,3.2 L2.8,0.7 L5.2,3.2"/><path d="M7.7,0.3 V9.4 M5.3,7 L7.7,9.5 L10.1,7"/></g></svg>
<svg class="s" style="left:688px;top:552.6px;" width="8" height="12" viewBox="0 0 8 12"><g fill="none" stroke="#c6c8ce" stroke-width="1.15" stroke-linejoin="round"><path d="M1.5,0.7 H6.5 V5.4 L7.5,6.9 H0.5 L1.5,5.4 Z"/><path d="M4,6.9 V11.4"/></g></svg>
<div class="t" style="left:704.8px;top:552.07px;font-size:13.5px;font-weight:700;color:#1e1e1e;letter-spacing:-0.1px;">Nguồn</div>
<svg class="s" style="left:933.5px;top:552.6px;" width="11" height="10" viewBox="0 0 11 10"><g fill="none" stroke="#c3c6cd" stroke-width="1.3"><path d="M2.8,0.8 V9.8 M0.4,3.2 L2.8,0.7 L5.2,3.2"/><path d="M7.7,0.3 V9.4 M5.3,7 L7.7,9.5 L10.1,7"/></g></svg>
<svg class="s" style="left:963px;top:552.6px;" width="8" height="12" viewBox="0 0 8 12"><g fill="none" stroke="#c6c8ce" stroke-width="1.15" stroke-linejoin="round"><path d="M1.5,0.7 H6.5 V5.4 L7.5,6.9 H0.5 L1.5,5.4 Z"/><path d="M4,6.9 V11.4"/></g></svg>
<div class="t" style="left:979.8px;top:552.07px;font-size:13.5px;font-weight:700;color:#1e1e1e;letter-spacing:-0.6px;">Chương</div>
<svg class="s" style="left:1043.5px;top:552.6px;" width="11" height="10" viewBox="0 0 11 10"><g fill="none" stroke="#c3c6cd" stroke-width="1.3"><path d="M2.8,0.8 V9.8 M0.4,3.2 L2.8,0.7 L5.2,3.2"/><path d="M7.7,0.3 V9.4 M5.3,7 L7.7,9.5 L10.1,7"/></g></svg>
<svg class="s" style="left:1073px;top:552.6px;" width="8" height="12" viewBox="0 0 8 12"><g fill="none" stroke="#c6c8ce" stroke-width="1.15" stroke-linejoin="round"><path d="M1.5,0.7 H6.5 V5.4 L7.5,6.9 H0.5 L1.5,5.4 Z"/><path d="M4,6.9 V11.4"/></g></svg>
<div class="t" style="left:1089.8px;top:552.07px;font-size:13.5px;font-weight:700;color:#1e1e1e;letter-spacing:-0.26px;">Khoản</div>
<svg class="s" style="left:1153.5px;top:552.6px;" width="11" height="10" viewBox="0 0 11 10"><g fill="none" stroke="#c3c6cd" stroke-width="1.3"><path d="M2.8,0.8 V9.8 M0.4,3.2 L2.8,0.7 L5.2,3.2"/><path d="M7.7,0.3 V9.4 M5.3,7 L7.7,9.5 L10.1,7"/></g></svg>
<div class="t" style="right:648.8px;top:552.07px;font-size:13.5px;font-weight:700;color:#1e1e1e;letter-spacing:-0.16px;">Số tiền</div>
<svg class="s" style="left:1221.5px;top:549.5px;" width="17" height="17" viewBox="0 0 17 17"><g fill="none" stroke="#555" stroke-width="1.15" stroke-linecap="round"><path d="M0.7,4.1 H16.2"/><path d="M4.8,3.9 V2.0 Q4.8,0.9 5.9,0.9 H11.2 Q12.3,0.9 12.3,2 V3.9"/><path d="M2.9,6.6 L3.6,15.2 Q3.7,16 4.5,16 H12.5 Q13.3,16 13.4,15.2 L14.1,6.6"/></g><path d="M6.3,8.6 L10.3,12.6 M10.3,8.6 L6.3,12.6" stroke="#f0393a" stroke-width="1.3"/></svg>
<svg class="s" style="left:1189.5px;top:580.7px;" width="18" height="18" viewBox="0 0 18 18"><g fill="none" stroke="#5a5a5a" stroke-width="1.1"><circle cx="8.9" cy="9" r="8"/><path d="M8.9,5.2 V12.8 M5.1,9 H12.7"/></g></svg>
<svg class="s" style="left:1220.5px;top:582px;" width="17" height="17" viewBox="0 0 17 17"><g fill="none" stroke="#5a5a5a" stroke-width="1.1" stroke-linecap="round"><path d="M0.6,4.1 H16.3"/><path d="M4.8,3.9 V1.9 Q4.8,0.8 5.9,0.8 H11.1 Q12.2,0.8 12.2,1.9 V3.9"/><path d="M2.9,6.9 L3.5,15.2 Q3.6,16.1 4.4,16.1 H12.5 Q13.3,16.1 13.4,15.2 L14.1,6.9"/><path d="M6.8,8.2 V13.1 M9.9,8.2 V13.1"/></g></svg>
<svg class="s" style="left:1189.5px;top:612.7px;" width="18" height="18" viewBox="0 0 18 18"><g fill="none" stroke="#5a5a5a" stroke-width="1.1"><circle cx="8.9" cy="9" r="8"/><path d="M8.9,5.2 V12.8 M5.1,9 H12.7"/></g></svg>
<svg class="s" style="left:1220.5px;top:614px;" width="17" height="17" viewBox="0 0 17 17"><g fill="none" stroke="#5a5a5a" stroke-width="1.1" stroke-linecap="round"><path d="M0.6,4.1 H16.3"/><path d="M4.8,3.9 V1.9 Q4.8,0.8 5.9,0.8 H11.1 Q12.2,0.8 12.2,1.9 V3.9"/><path d="M2.9,6.9 L3.5,15.2 Q3.6,16.1 4.4,16.1 H12.5 Q13.3,16.1 13.4,15.2 L14.1,6.9"/><path d="M6.8,8.2 V13.1 M9.9,8.2 V13.1"/></g></svg>
<svg class="s" style="left:1255px;top:546px;" width="8" height="5" viewBox="0 0 8 5"><path d="M0.5,4.5 H7.5 L4,0.8 Z" fill="#aeb2ba"/></svg>
<div class="b" style="left:1256px;top:555px;width:6px;height:89px;background:#b4b8c0;border-radius:3px;"></div>
<svg class="s" style="left:1255px;top:666px;" width="8" height="5" viewBox="0 0 8 5"><path d="M0.5,0.5 H7.5 L4,4.2 Z" fill="#aeb2ba"/></svg>
<div class="t" style="left:30.6px;top:653.25px;font-size:14px;font-weight:400;color:#2a2a2a;letter-spacing:-0.1px;">Tổng số: <b>0</b> bản ghi</div>
<svg class="s" style="left:21px;top:675px;" width="5" height="8" viewBox="0 0 5 8"><path d="M4.5,0.5 V7.5 L0.8,4 Z" fill="#aeb2ba"/></svg>
<div class="b" style="left:31px;top:676px;width:492px;height:6px;background:#b4b8c0;border-radius:3px;"></div>
<svg class="s" style="left:1247px;top:675px;" width="5" height="8" viewBox="0 0 5 8"><path d="M0.5,0.5 V7.5 L4.2,4 Z" fill="#aeb2ba"/></svg>
<div class="b" style="left:1px;top:693px;width:1281px;height:48px;background:#1d1f2c;"></div>
<div class="b" style="left:23px;top:704px;width:88px;height:26px;border:1.5px solid #f0f0f0;border-radius:5px;"></div>
<div class="t" style="left:50px;top:709.80px;font-size:13px;font-weight:700;color:#fff;letter-spacing:0.1px;">Đóng</div>
<svg class="s" style="left:334.5px;top:705.5px;" width="24" height="24" viewBox="0 0 24 24"><g fill="none" stroke="#9d9ea8" stroke-width="1.5" stroke-linecap="round" stroke-linejoin="round"><path d="M20.6,10.3 A9.9,9.9 0 1 1 18.9,5.4"/><path d="M20,1.8 V6.6 H15.2"/></g></svg>
<div class="t" style="left:364.9px;top:709.80px;font-size:13px;font-weight:700;color:#9d9ea8;letter-spacing:0.1px;">Nạp</div>
<div class="b" style="left:416px;top:708px;width:2px;height:18px;background:#565867;"></div>
<svg class="s" style="left:441px;top:705px;" width="24" height="24" viewBox="0 0 24 24"><g fill="none" stroke="#fff" stroke-width="1.6"><circle cx="12" cy="12.2" r="10"/></g><g fill="#fff"><rect x="10.9" y="7.7" width="2.2" height="2" rx="0.5"/><rect x="10.9" y="11.2" width="2.2" height="2" rx="0.5"/><rect x="10.9" y="14.5" width="2.2" height="2" rx="0.5"/></g></svg>
<div class="t" style="left:473.6px;top:709.80px;font-size:13px;font-weight:700;color:#fff;letter-spacing:0.03px;">Tiện ích</div>
<svg class="s" style="left:530px;top:714px;" width="10" height="6" viewBox="0 0 10 6"><path d="M0.5,0.5 H9.5 L5,5.6 Z" fill="#fff"/></svg>
<div class="b" style="left:565px;top:708px;width:2px;height:18px;background:#565867;"></div>
<svg class="s" style="left:590px;top:705px;" width="24" height="24" viewBox="0 0 24 24"><g fill="none" stroke="#9d9ea8" stroke-width="1.5" stroke-linejoin="round"><path d="M5.5,7.2 V3.3 Q5.5,1.8 7,1.8 H17 Q18.5,1.8 18.5,3.3 V7.2"/><path d="M5.5,16.8 H3.5 Q2,16.8 2,15.3 V8.7 Q2,7.2 3.5,7.2 H20.5 Q22,7.2 22,8.7 V15.3 Q22,16.8 20.5,16.8 H18.5"/><path d="M5.5,13.5 H18.5 V20.8 Q18.5,22.3 17,22.3 H7 Q5.5,22.3 5.5,20.8 Z"/><path d="M3.8,13.5 H20.2"/></g></svg>
<div class="t" style="left:622.3px;top:709.80px;font-size:13px;font-weight:700;color:#9d9ea8;letter-spacing:0px;">In</div>
<svg class="s" style="left:647px;top:714px;" width="10" height="6" viewBox="0 0 10 6"><path d="M0.5,0.5 H9.5 L5,5.6 Z" fill="#9d9ea8"/></svg>
<div class="b" style="left:675px;top:708px;width:2px;height:18px;background:#565867;"></div>
<svg class="s" style="left:694px;top:705px;" width="22" height="24" viewBox="0 0 22 24"><g fill="none" stroke="#c0c1c8" stroke-width="1.6" stroke-linejoin="round"><path d="M12.4,1.9 H4.6 Q2.6,1.9 2.6,3.9 V19.9 Q2.6,21.9 4.6,21.9 H17.2 Q19.2,21.9 19.2,19.9 V8.2 Z"/><path d="M12.4,1.9 V8.2 H19.2"/><path d="M6.3,7.1 H9.6 M6.3,11 H15.6 M6.3,15 H15.6"/></g></svg>
<div class="t" style="left:724.6px;top:709.80px;font-size:13px;font-weight:700;color:#bfc0c7;letter-spacing:0.2px;">Duyệt</div>
<div class="b" style="left:787px;top:708px;width:2px;height:18px;background:#565867;"></div>
<svg class="s" style="left:806px;top:705px;" width="25" height="24" viewBox="0 0 25 24"><g fill="none" stroke="#c0c1c8" stroke-width="1.6" stroke-linecap="round"><path d="M2.2,6.5 H23.7"/><path d="M8.5,6.3 V4 Q8.5,2.3 10.2,2.3 H15.8 Q17.5,2.3 17.5,4 V6.3"/><path d="M5.7,9.1 L6.9,20.3 Q7.1,21.9 8.7,21.9 H17.1 Q18.7,21.9 18.9,20.3 L20.1,9.1"/><path d="M10.9,11 V18 M15,11 V18"/></g></svg>
<div class="t" style="left:839.3px;top:709.80px;font-size:13px;font-weight:700;color:#bfc0c7;letter-spacing:0.2px;">Xóa</div>
<div class="b" style="left:1073px;top:704px;width:88px;height:26px;border:1.5px solid #f0f0f0;border-radius:5px;"></div>
<div class="t" style="left:1100.5px;top:709.80px;font-size:13px;font-weight:700;color:#fff;letter-spacing:0.1px;">Hoãn</div>
<div class="b" style="left:1172px;top:704px;width:88px;height:26px;background:#5f5fee;border-radius:4.5px;"></div>
<div class="t" style="left:1205.2px;top:709.80px;font-size:13px;font-weight:700;color:#fff;letter-spacing:0.2px;">Cất</div>
<div class="b" style="left:0px;top:0px;width:1283px;height:742px;border:1px solid #57534f;"></div>
</body></html>
